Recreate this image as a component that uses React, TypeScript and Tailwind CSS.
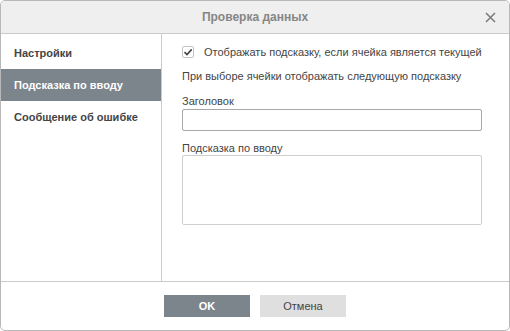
import React from "react";

export default function App() {
  const font = { fontFamily: '"Liberation Sans", Arial, sans-serif' };
  return (
    <div className="w-[510px] h-[331px] bg-white" style={font}>
      <div className="w-[510px] h-[331px] flex flex-col border border-[#b8b8b8] rounded-[5px] overflow-hidden bg-white">
        <div className="h-[33px] shrink-0 grid grid-cols-[40px_1fr_40px] items-center bg-[#efefef] border-b border-[#cbcbcb]">
          <div />
          <div className="text-center text-[12px] font-bold text-[#868686]">Проверка данных</div>
          <div className="flex justify-center pl-[3px]">
            <svg width="11" height="11" viewBox="0 0 11 11">
              <path d="M1 1L10 10M10 1L1 10" stroke="#7a7a7a" strokeWidth="1.5" fill="none" />
            </svg>
          </div>
        </div>
        <div className="flex flex-1 min-h-0">
          <div className="w-[161px] shrink-0 border-r border-[#cbcbcb] pt-[3px]">
            <div className="h-[32px] flex items-center pl-[13px] text-[11px] font-bold text-[#444]">Настройки</div>
            <div className="h-[32px] flex items-center pl-[13px] text-[11px] font-bold text-white bg-[#7d858c]">Подсказка по вводу</div>
            <div className="h-[32px] flex items-center pl-[13px] text-[11px] font-bold text-[#444]">Сообщение об ошибке</div>
          </div>
          <div className="flex-1 pl-[20px] pt-[11px] text-[11px] leading-[14px] text-[#444]">
            <div className="flex items-center h-[14px]">
              <div className="w-[12px] h-[12px] border border-[#c4c4c4] rounded-[2px] flex items-center justify-center">
                <svg width="10" height="10" viewBox="0 0 10 10">
                  <path d="M1.5 5.2L4 7.6L8.7 2.4" stroke="#444" strokeWidth="1.6" fill="none" />
                </svg>
              </div>
              <span className="ml-[10px]">Отображать подсказку, если ячейка является текущей</span>
            </div>
            <div className="mt-[10px]">При выборе ячейки отображать следующую подсказку</div>
            <div className="mt-[11px]">Заголовок</div>
            <div className="mt-[1px] w-[300px] h-[22px] border border-[#a8a8a8] rounded-[2px]" />
            <div className="mt-[10px]">Подсказка по вводу</div>
            <div className="w-[300px] h-[70px] border border-[#cfcfcf] rounded-[2px]" />
          </div>
        </div>
        <div className="h-[49px] shrink-0 border-t border-[#cbcbcb] flex justify-center gap-[10px] pt-[13px]">
          <div className="w-[86px] h-[22px] bg-[#7d858c] text-white text-[11px] font-bold flex items-center justify-center">OK</div>
          <div className="w-[86px] h-[22px] bg-[#dfdfdf] text-[#444] text-[11px] flex items-center justify-center">Отмена</div>
        </div>
      </div>
    </div>
  );
}
